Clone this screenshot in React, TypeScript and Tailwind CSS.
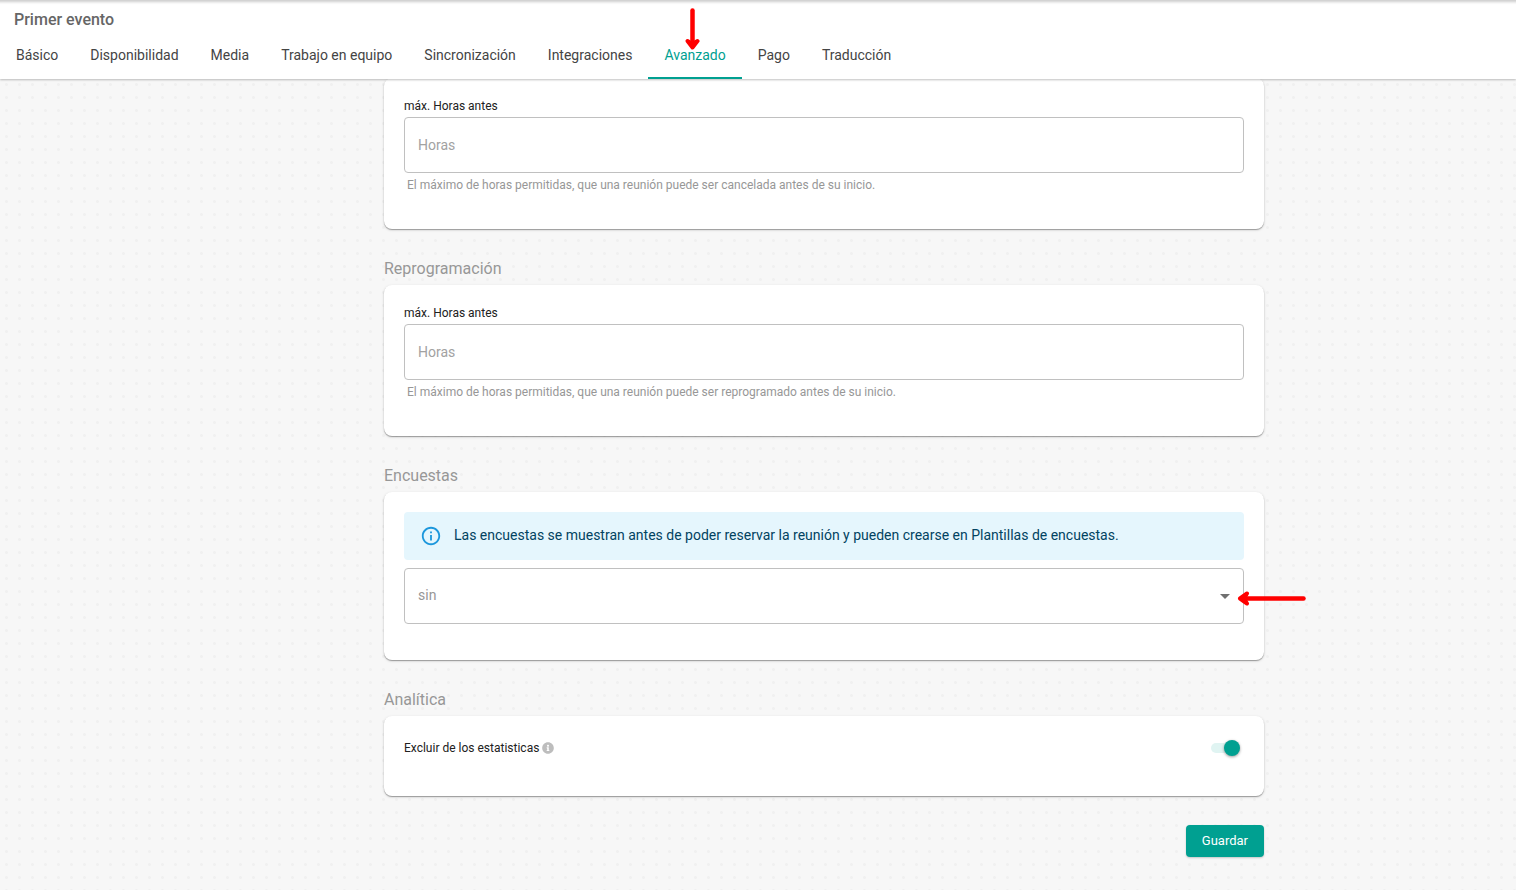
import { useState } from 'react';
import type { ReactNode } from 'react';
import { FaInfoCircle } from 'react-icons/fa';
import { MdArrowDropDown, MdInfoOutline } from 'react-icons/md';

const tabs = [
	'Básico',
	'Disponibilidad',
	'Media',
	'Trabajo en equipo',
	'Sincronización',
	'Integraciones',
	'Avanzado',
	'Pago',
	'Traducción',
];

function Card({ children }: { children: ReactNode }) {
	return (
		<div className="rounded-lg bg-white p-5 shadow-[0_1px_1px_rgba(0,0,0,0.3),0_1px_3px_rgba(0,0,0,0.15)]">{children}</div>
	);
}

function Section({ title, children }: { title: string; children: ReactNode }) {
	return (
		<section>
			<h2 className="pt-7 pb-1 text-base leading-6 text-[#979797]">{title}</h2>
			<Card>{children}</Card>
		</section>
	);
}

function HoursField({ id, helper }: { id: string; helper: string }) {
	return (
		<div className="flex flex-col pb-4">
			<label htmlFor={id} className="pb-[3px] text-xs leading-4 text-[#212121]">
				máx. Horas antes
			</label>
			<input
				id={id}
				className="h-14 w-full rounded border border-[#c0c0c0] bg-white px-[13px] text-sm text-[#333] outline-none placeholder:text-[#a2a2a2] focus:border-[#00a091]"
				placeholder="Horas"
				aria-describedby={`${id}-helper`}
			/>
			<p id={`${id}-helper`} className="px-[3px] pt-1 text-xs leading-4 text-[#979797]">
				{helper}
			</p>
		</div>
	);
}

export default function App() {
	const [active, setActive] = useState('Avanzado');
	const [survey, setSurvey] = useState('sin');
	const [excluded, setExcluded] = useState(true);

	return (
		<div className="min-h-screen bg-[#f7f7f7] bg-[radial-gradient(circle,#f0f0f0_1px,transparent_2px)] bg-[size:13px_13px] font-['Roboto',sans-serif]">
			<header className="sticky top-0 z-10 bg-white shadow-[inset_0_5px_3px_-3px_rgba(0,0,0,0.2),0_1px_2px_rgba(0,0,0,0.25)]">
				<h1 className="px-3.5 pt-2 text-base leading-6 font-medium text-[#666]">Primer evento</h1>
				<nav className="flex h-[47px]">
					{tabs.map((tab) => (
						<a
							key={tab}
							href="#"
							onClick={(event) => {
								event.preventDefault();
								setActive(tab);
							}}
							className={
								tab === active
									? 'relative flex border-b-2 border-[#00a091] px-4 pt-[13px] text-sm text-[#00a091]'
									: 'relative flex border-b-2 border-transparent px-4 pt-[13px] text-sm text-[#444]'
							}
						>
							{tab}
							{tab === 'Avanzado' && (
								<svg className="absolute bottom-[27px] left-9 h-11 w-4" viewBox="0 0 16 44" fill="none" stroke="#ff0000" strokeLinecap="round" strokeLinejoin="round" aria-hidden="true">
									<path d="M8.500 4.500v33" strokeWidth="4.500" />
									<path d="M3.500 35l5 6.500 5-6.500-5 3z" strokeWidth="4" fill="#ff0000" />
								</svg>
							)}
						</a>
					))}
				</nav>
			</header>

			<main className="-mt-px pl-[132px]">
				<div className="mx-auto max-w-[880px] pb-8">
					<Card>
						<HoursField id="cancel-hours" helper="El máximo de horas permitidas, que una reunión puede ser cancelada antes de su inicio." />
					</Card>

					<Section title="Reprogramación">
						<HoursField id="reschedule-hours" helper="El máximo de horas permitidas, que una reunión puede ser reprogramado antes de su inicio." />
					</Section>

					<Section title="Encuestas">
						<div className="flex h-12 items-center gap-3 rounded bg-[#e5f6fd] px-4 text-sm text-[#014361]">
							<MdInfoOutline className="size-[22px] shrink-0 text-[#1c97dc]" />
							<p className="pb-0.5">Las encuestas se muestran antes de poder reservar la reunión y pueden crearse en Plantillas de encuestas.</p>
						</div>
						<div className="relative mt-2 mb-4">
							<select
								aria-label="Encuesta"
								value={survey}
								onChange={(event) => setSurvey(event.target.value)}
								className="h-14 w-full appearance-none rounded border border-[#c0c0c0] bg-white px-[13px] pb-0.5 text-sm text-[#979797] outline-none focus:border-[#00a091]"
							>
								<option value="sin">sin</option>
							</select>
							<MdArrowDropDown className="pointer-events-none absolute top-4 right-[7px] size-6 text-[#707070]" />
							<svg className="pointer-events-none absolute top-[22px] -right-16 h-4 w-[72px]" viewBox="0 0 72 16" fill="none" stroke="#ff0000" strokeLinecap="round" strokeLinejoin="round" aria-hidden="true">
								<path d="M10 8.500H67.500" strokeWidth="4.500" />
								<path d="M11 3.500l-7 5 7 5-3-5z" strokeWidth="4" fill="#ff0000" />
							</svg>
						</div>
					</Section>

					<Section title="Analítica">
						<div className="flex h-6 items-center justify-between pr-1">
							<label htmlFor="exclude-stats" className="flex items-center gap-[3px] text-xs text-[#212121]">
								Excluir de los estatisticas
								<FaInfoCircle className="size-3 text-[#bdbdbd]" />
							</label>
							<input
								id="exclude-stats"
								type="checkbox"
								role="switch"
								checked={excluded}
								onChange={(event) => setExcluded(event.target.checked)}
								className="flex h-2.5 w-[29px] cursor-pointer appearance-none items-center rounded-full bg-[#ddd] before:size-4 before:shrink-0 before:rounded-full before:bg-white before:shadow-[0_1px_3px_rgba(0,0,0,0.4)] checked:justify-end checked:bg-[#e0f4f2] checked:before:bg-[#00a091]"
							/>
						</div>
						<div className="h-4" />
					</Section>

					<div className="flex justify-end pt-[29px]">
						<button
							type="button"
							className="h-8 rounded bg-[#00a091] px-4 text-[13px] text-white shadow-[0_1px_2px_rgba(0,0,0,0.2)]"
						>
							Guardar
						</button>
					</div>
				</div>
			</main>
		</div>
	);
}
